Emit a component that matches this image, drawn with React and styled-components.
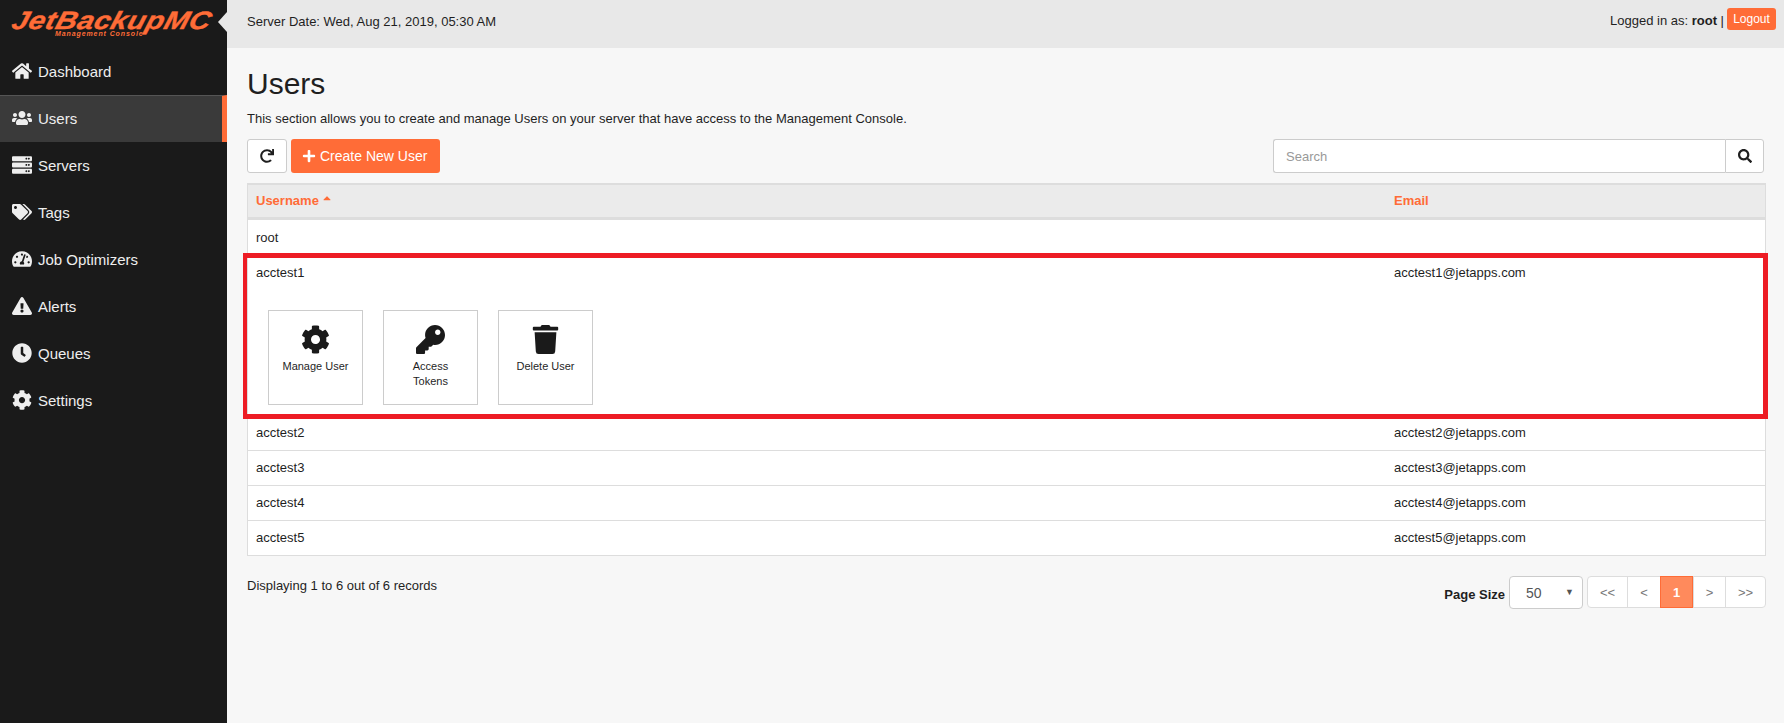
import React from 'react'
import styled, { createGlobalStyle } from 'styled-components'
import {
  FaHome, FaUsers, FaServer, FaTags, FaTachometerAlt, FaExclamationTriangle,
  FaClock, FaCog, FaRedo, FaPlus, FaSearch, FaKey, FaTrash, FaCaretUp,
} from 'react-icons/fa'

const orange = '#ff6c37'

const GlobalStyle = createGlobalStyle`
  html, body { margin: 0; padding: 0; background: #f7f7f7; }
  body {
    font-family: "Liberation Sans", Arial, sans-serif;
    font-size: 13px;
    color: #1f1f1f;
  }
  * { box-sizing: border-box; }
`

const Page = styled.div`
  display: flex;
  min-height: 723px;
`

const Sidebar = styled.aside`
  position: relative;
  flex: 0 0 227px;
  background: #1a1a1a;
`

const Notch = styled.span`
  position: absolute;
  top: 12px;
  right: 0;
  width: 0;
  height: 0;
  border-top: 10px solid transparent;
  border-bottom: 10px solid transparent;
  border-right: 9px solid #e8e8e8;
`

const Logo = styled.div`
  height: 48px;
  padding: 9px 0 0 13px;
  color: ${orange};
  font-weight: 700;
  font-style: italic;
`

const LogoMark = styled.div`
  font-size: 25px;
  line-height: 22px;
  letter-spacing: 0.4px;
  transform-origin: left center;
  transform: scaleX(1.17) skewX(-14deg);
  -webkit-text-stroke: 0.4px ${orange};
  white-space: nowrap;
`

const LogoSub = styled.div`
  font-size: 7px;
  line-height: 6px;
  letter-spacing: 0.9px;
  margin-left: 42px;
  white-space: nowrap;
`

const Menu = styled.nav`
  display: flex;
  flex-direction: column;
`

const MenuItem = styled.a`
  position: relative;
  display: flex;
  align-items: center;
  height: 47px;
  padding: 0 0 2px 12px;
  color: #eeeeee;
  font-size: 15px;
  background: ${p => (p.$active ? '#3a3a3a' : 'transparent')};
  border-top: 1px solid ${p => (p.$active ? '#555555' : 'transparent')};
  border-right: 5px solid ${p => (p.$active ? orange : 'transparent')};
`

const MenuIcon = styled.span`
  display: flex;
  align-items: center;
  flex: 0 0 26px;
  font-size: 20px;
  color: #eeeeee;
  svg { flex: none; width: auto; height: 1em; }
`

const Content = styled.div`
  flex: 1;
  min-width: 0;
`

const TopBar = styled.header`
  display: flex;
  justify-content: space-between;
  height: 48px;
  padding: 0 8px 0 20px;
  background: #e8e8e8;
`

const ServerDate = styled.div`
  margin-top: 14px;
`

const UserInfo = styled.div`
  display: flex;
  align-items: flex-start;
  gap: 3px;
  padding-top: 8px;
`

const LoggedIn = styled.span`
  margin-top: 5px;
`

const LogoutButton = styled.button`
  height: 22px;
  width: 49px;
  padding: 0;
  border: 0;
  border-radius: 3px;
  background: ${orange};
  color: #fff;
  font: 12px "Liberation Sans", Arial, sans-serif;
`

const Main = styled.main`
  padding: 0 18px 0 20px;
`

const Title = styled.h1`
  margin: 18px 0 0;
  font-size: 30px;
  font-weight: 400;
  line-height: 36px;
`

const Lead = styled.p`
  margin: 9px 0 0;
  line-height: 16px;
`

const Toolbar = styled.div`
  display: flex;
  justify-content: space-between;
  margin-top: 12px;
  padding-right: 2px;
`

const Actions = styled.div`
  display: flex;
  gap: 4px;
`

const IconButton = styled.button`
  display: flex;
  align-items: center;
  justify-content: center;
  width: 40px;
  height: 34px;
  padding: 0;
  background: #fff;
  border: 1px solid #cccccc;
  border-radius: 3px;
  color: #1f1f1f;
  font-size: 14px;
`

const CreateButton = styled.button`
  display: flex;
  align-items: center;
  gap: 4px;
  height: 34px;
  width: 149px;
  padding: 0 0 0 11px;
  background: ${orange};
  border: 0;
  border-radius: 3px;
  color: #fff;
  font: 14px "Liberation Sans", Arial, sans-serif;
`

const SearchGroup = styled.div`
  display: flex;
  width: 491px;
  height: 34px;
`

const SearchInput = styled.input`
  flex: 1;
  min-width: 0;
  padding: 0 12px;
  background: #fff;
  border: 1px solid #cccccc;
  border-right: 0;
  border-radius: 3px 0 0 3px;
  font: 13px "Liberation Sans", Arial, sans-serif;
  &::placeholder { color: #999999; opacity: 1; }
`

const SearchButton = styled(IconButton)`
  width: 39px;
  border-radius: 0 3px 3px 0;
`

const Table = styled.div`
  margin-top: 10px;
  border: 1px solid #dddddd;
  border-top-width: 2px;
  background: #fff;
`

const HeadRow = styled.div`
  display: grid;
  grid-template-columns: 1138px 1fr;
  align-items: center;
  height: 35px;
  padding-bottom: 2px;
  background: #ebebeb;
  border-bottom: 3px solid #dddddd;
  color: ${orange};
  font-weight: 700;
`

const Row = styled.div`
  display: grid;
  grid-template-columns: 1138px 1fr;
  align-items: center;
  height: ${p => p.$h || 35}px;
  padding-bottom: ${p => (p.$plain ? 0 : 1)}px;
  border-top: ${p => (p.$plain ? 0 : '1px solid #dddddd')};
`

const Cell = styled.div`
  display: flex;
  align-items: center;
  padding: 0 8px;
`

const SortCaret = styled(FaCaretUp)`
  margin: -5px 0 0 2px;
  font-size: 12px;
`

const Expanded = styled.div`
  position: relative;
  height: 161px;
`

const Highlight = styled.span`
  position: absolute;
  top: -1px;
  bottom: -4px;
  left: -5px;
  right: -3px;
  border: 5px solid #ed1c24;
  border-left-width: 4.5px;
  pointer-events: none;
`

const Tiles = styled.div`
  display: flex;
  gap: 20px;
  padding: 20px 0 0 20px;
`

const Tile = styled.a`
  display: flex;
  flex-direction: column;
  align-items: center;
  width: 95px;
  height: 95px;
  padding: 14px 12px 0;
  background: #fff;
  border: 1px solid #cccccc;
  color: #1f1f1f;
  font-size: 11px;
  line-height: 15px;
  text-align: center;
`

const TileIcon = styled.span`
  display: flex;
  height: 29px;
  margin-bottom: 5px;
  font-size: 29px;
  color: #1a1a1a;
`

const Footer = styled.div`
  display: flex;
  justify-content: space-between;
  align-items: flex-start;
  margin-top: 20px;
`

const Records = styled.div`
  margin-top: 2px;
`

const Paging = styled.div`
  display: flex;
  align-items: flex-start;
`

const SizeLabel = styled.label`
  margin: 11px 4px 0 0;
  font-weight: 700;
`

const SizeSelect = styled.div`
  position: relative;
  width: 74px;
  height: 33px;
  margin-right: 4px;
  &::after {
    content: "▼";
    position: absolute;
    top: 11px;
    right: 9px;
    font-size: 9px;
    color: #555;
  }
`

const SizeField = styled.select`
  appearance: none;
  width: 100%;
  height: 100%;
  padding: 0 0 0 16px;
  background: #fff;
  border: 1px solid #cccccc;
  border-radius: 4px;
  color: #555;
  font: 14px "Liberation Sans", Arial, sans-serif;
`

const Pager = styled.div`
  display: flex;
  height: 32px;
  background: #fff;
  border: 1px solid #dddddd;
  border-radius: 4px;
`

const PageLink = styled.a`
  display: flex;
  align-items: center;
  justify-content: center;
  width: ${p => p.$w}px;
  margin: ${p => (p.$active ? '-1px 0' : 0)};
  color: ${p => (p.$active ? '#fff' : '#777')};
  font-weight: ${p => (p.$active ? 700 : 400)};
  background: ${p => (p.$active ? '#ff8a5c' : 'transparent')};
  border: ${p => (p.$active ? `1px solid ${orange}` : 0)};
  border-left: ${p => (p.$first || p.$active ? '' : '1px solid #dddddd')};
`

const menu = [
  ['Dashboard', FaHome],
  ['Users', FaUsers],
  ['Servers', FaServer],
  ['Tags', FaTags],
  ['Job Optimizers', FaTachometerAlt],
  ['Alerts', FaExclamationTriangle],
  ['Queues', FaClock],
  ['Settings', FaCog],
]

const others = ['acctest2', 'acctest3', 'acctest4', 'acctest5']

const pages = [
  ['<<', 39],
  ['<', 33],
  ['1', 33],
  ['>', 32],
  ['>>', 40],
]

export default function App() {
  return (
    <Page>
      <GlobalStyle />
      <Sidebar>
        <Notch />
        <Logo>
          <LogoMark>JetBackupMC</LogoMark>
          <LogoSub>Management Console</LogoSub>
        </Logo>
        <Menu>
          {menu.map(([label, Icon]) => (
            <MenuItem key={label} $active={label === 'Users'}>
              <MenuIcon><Icon /></MenuIcon>
              {label}
            </MenuItem>
          ))}
        </Menu>
      </Sidebar>

      <Content>
        <TopBar>
          <ServerDate>Server Date: Wed, Aug 21, 2019, 05:30 AM</ServerDate>
          <UserInfo>
            <LoggedIn>Logged in as: <b>root</b> |</LoggedIn>
            <LogoutButton>Logout</LogoutButton>
          </UserInfo>
        </TopBar>

        <Main>
          <Title>Users</Title>
          <Lead>This section allows you to create and manage Users on your server that have access to the Management Console.</Lead>

          <Toolbar>
            <Actions>
              <IconButton><FaRedo /></IconButton>
              <CreateButton><FaPlus /> Create New User</CreateButton>
            </Actions>
            <SearchGroup>
              <SearchInput placeholder="Search" />
              <SearchButton><FaSearch /></SearchButton>
            </SearchGroup>
          </Toolbar>

          <Table>
            <HeadRow>
              <Cell>Username<SortCaret /></Cell>
              <Cell>Email</Cell>
            </HeadRow>
            <Row $plain $h={34}>
              <Cell>root</Cell>
              <Cell />
            </Row>
            <Expanded>
              <Highlight />
              <Row $plain $h={36}>
                <Cell>acctest1</Cell>
                <Cell>acctest1@jetapps.com</Cell>
              </Row>
              <Tiles>
                <Tile>
                  <TileIcon><FaCog /></TileIcon>
                  Manage User
                </Tile>
                <Tile>
                  <TileIcon><FaKey /></TileIcon>
                  Access Tokens
                </Tile>
                <Tile>
                  <TileIcon><FaTrash /></TileIcon>
                  Delete User
                </Tile>
              </Tiles>
            </Expanded>
            {others.map((name, i) => (
              <Row key={name} $plain={i === 0}>
                <Cell>{name}</Cell>
                <Cell>{name}@jetapps.com</Cell>
              </Row>
            ))}
          </Table>

          <Footer>
            <Records>Displaying 1 to 6 out of 6 records</Records>
            <Paging>
              <SizeLabel>Page Size</SizeLabel>
              <SizeSelect>
                <SizeField defaultValue="50">
                  <option>50</option>
                </SizeField>
              </SizeSelect>
              <Pager>
                {pages.map(([label, w], i) => (
                  <PageLink key={label} $w={w} $first={i === 0} $active={label === '1'}>{label}</PageLink>
                ))}
              </Pager>
            </Paging>
          </Footer>
        </Main>
      </Content>
    </Page>
  )
}
